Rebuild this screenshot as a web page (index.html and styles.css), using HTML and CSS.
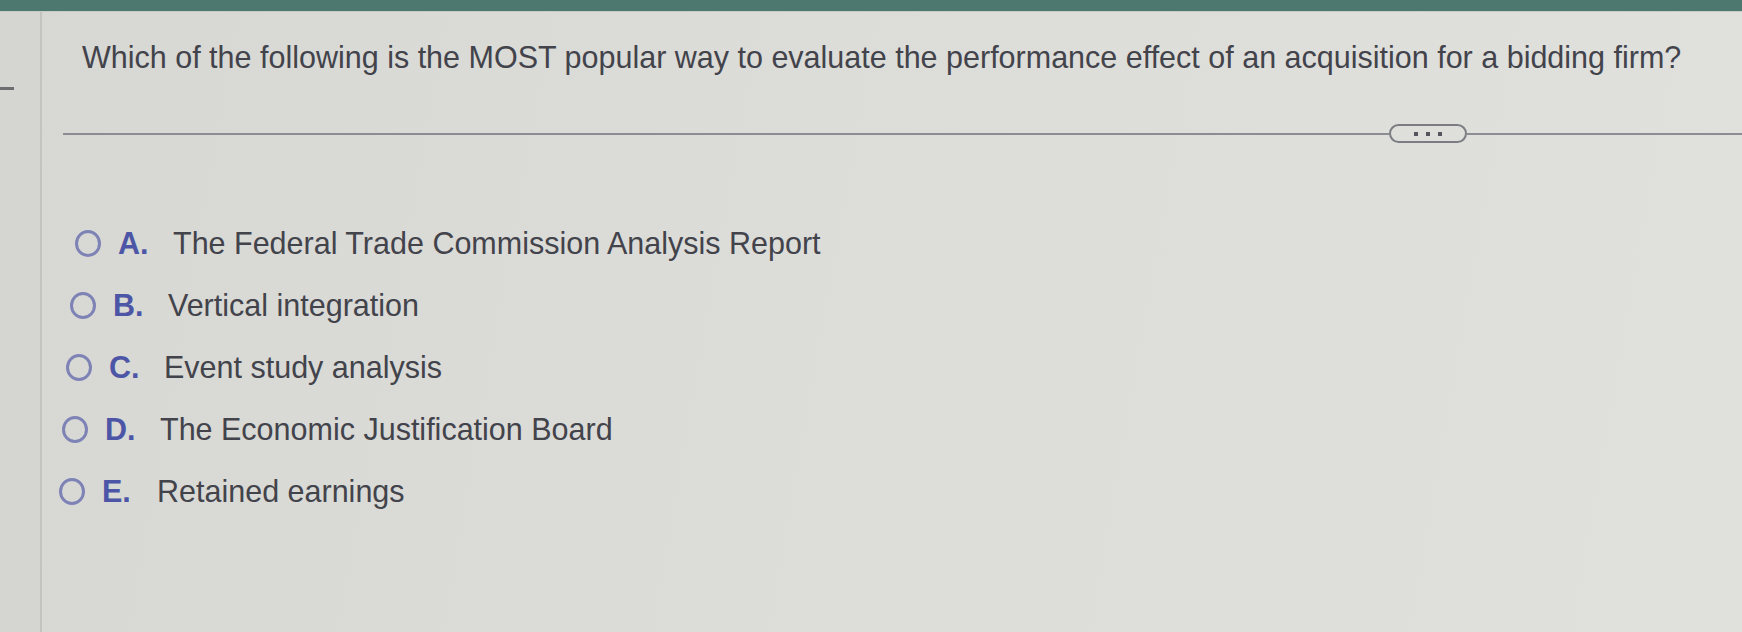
FILE: index.html
```html
<!DOCTYPE html>
<html lang="en">
<head>
<meta charset="utf-8">
<title>Question</title>
<link rel="stylesheet" href="styles.css">
</head>
<body>
<div class="topbar"></div>
<div class="screen">
  <div class="side"><div class="dash"></div></div>
  <div class="main">
    <p class="question">Which of the following is the MOST popular way to evaluate the performance effect of an acquisition for a bidding firm?</p>
    <div class="divider">
      <div class="rule rule-left"></div>
      <div class="pill"><span class="dot"></span><span class="dot"></span><span class="dot"></span></div>
      <div class="rule rule-right"></div>
    </div>
    <ul class="options">
      <li class="option"><span class="radio"></span><span class="letter">A.</span><span class="text">The Federal Trade Commission Analysis Report</span></li>
      <li class="option"><span class="radio"></span><span class="letter">B.</span><span class="text">Vertical integration</span></li>
      <li class="option"><span class="radio"></span><span class="letter">C.</span><span class="text">Event study analysis</span></li>
      <li class="option"><span class="radio"></span><span class="letter">D.</span><span class="text">The Economic Justification Board</span></li>
      <li class="option"><span class="radio"></span><span class="letter">E.</span><span class="text">Retained earnings</span></li>
    </ul>
  </div>
</div>
</body>
</html>
```
FILE: styles.css
```css
html, body {
  margin: 0;
  padding: 0;
  height: 100%;
}
body {
  background: linear-gradient(100deg, #d7d7d3 0%, #dcdcd9 45%, #e0e0dd 100%);
  font-family: "Liberation Sans", Arial, sans-serif;
  color: #42434b;
  overflow: hidden;
}
.topbar {
  height: 11px;
  background: #4c786f;
  border-bottom: 1px solid #c9cbc8;
}
.screen {
  display: flex;
  height: calc(100% - 12px);
}
.side {
  width: 40px;
  border-right: 2px solid #c3c3c0;
  background: #d5d5d1;
  display: flex;
  flex-direction: column;
}
.dash {
  margin-top: 75px;
  width: 14px;
  height: 3px;
  background: #6d6e72;
}
.main {
  flex: 1;
  padding-left: 21px;
}
.question {
  margin: 28px 0 0 0;
  padding-left: 19px;
  font-size: 30.5px;
  line-height: 34px;
  white-space: nowrap;
}
.divider {
  margin-top: 50px;
  display: flex;
  align-items: center;
  height: 19px;
}
.rule {
  height: 2px;
  background: #8b8d93;
}
.rule-left {
  width: 1326px;
}
.rule-right {
  flex: 1;
}
.pill {
  box-sizing: border-box;
  width: 78px;
  height: 19px;
  border: 2px solid #7b7d83;
  border-radius: 10px;
  display: flex;
  align-items: center;
  justify-content: center;
  gap: 8px;
}
.dot {
  width: 4px;
  height: 4px;
  background: #55565c;
}
.options {
  list-style: none;
  margin: 69px 0 0 0;
  padding: 0 0 0 12px;
}
.option {
  display: flex;
  align-items: center;
  height: 62px;
}
.option:nth-child(2) { margin-left: -5px; }
.option:nth-child(3) { margin-left: -9px; }
.option:nth-child(4) { margin-left: -13px; }
.option:nth-child(5) { margin-left: -16px; }
.radio {
  box-sizing: border-box;
  width: 26px;
  height: 27px;
  border: 3px solid #7e83b6;
  border-radius: 50%;
  margin-right: 17px;
  flex: none;
}
.letter {
  min-width: 55px;
  font-weight: bold;
  font-size: 30.5px;
  color: #4d56a6;
}
.text {
  font-size: 30.5px;
  white-space: nowrap;
}
```
